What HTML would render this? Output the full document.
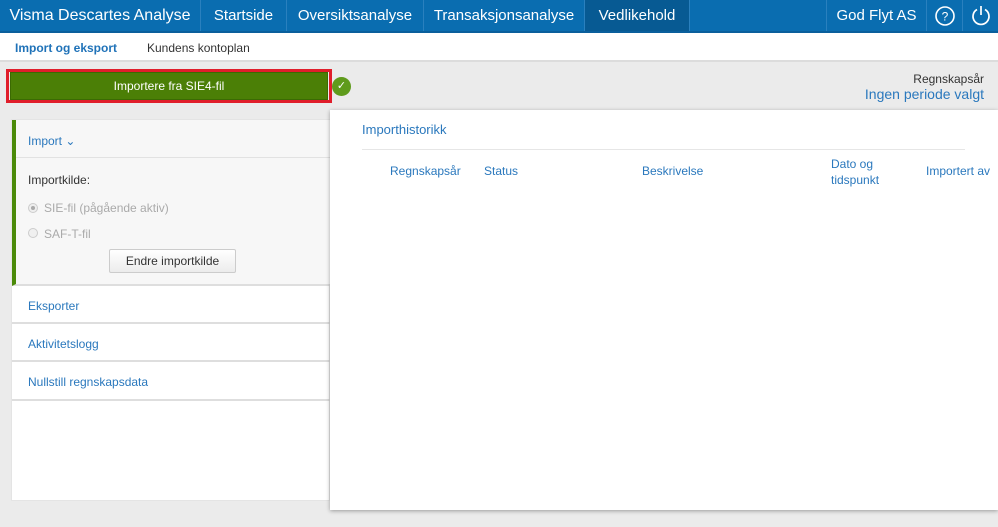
<!DOCTYPE html>
<html><head><meta charset="utf-8"><style>
*{box-sizing:border-box;margin:0;padding:0}
body{width:998px;height:527px;overflow:hidden;background:#ebebeb;font-family:"Liberation Sans",sans-serif;position:relative}
.nav{position:absolute;left:0;top:0;width:998px;height:33px;background:#0a6db0;border-bottom:2px solid #0a5f9c}
.nav div{position:absolute;top:0;height:31px;line-height:31px;color:#fff;font-size:15px;text-align:center;border-right:1px solid #2a80be}
.sub{position:absolute;left:0;top:33px;width:998px;height:29px;background:#fff;border-bottom:2px solid #dcdcdc;font-size:12px}
.sub span{position:absolute;top:8px}
.abs{position:absolute}
.panel{position:absolute;left:11px;top:119px;width:319px;height:382px;background:#fff;border:1px solid #e4e4e4}
.row{position:absolute;left:0;width:318px;border-bottom:2px solid #dedede;font-size:12px;color:#2a78bd;padding-left:16px;padding-top:2px}
.right{position:absolute;left:330px;top:110px;width:668px;height:400px;background:#fff;box-shadow:0 1px 4px rgba(0,0,0,.35)}
.h{position:absolute;font-size:12px;color:#2a78bd}
</style></head><body>
<div class="nav">
<div style="left:0;width:201px;font-size:16px">Visma Descartes Analyse</div>
<div style="left:201px;width:86px">Startside</div>
<div style="left:287px;width:137px">Oversiktsanalyse</div>
<div style="left:424px;width:161px">Transaksjonsanalyse</div>
<div style="left:585px;width:105px;background:#075a93">Vedlikehold</div>
<div style="left:826px;width:101px;border-left:1px solid #2a80be">God Flyt AS</div>
<div style="left:927px;width:36px"><svg width="22" height="22" viewBox="0 0 22 22" style="margin-top:5px"><circle cx="11" cy="11" r="9" fill="none" stroke="#fff" stroke-width="1.6"/><text x="11" y="15.5" text-anchor="middle" font-size="12" fill="#fff" font-family="Liberation Sans">?</text></svg></div>
<div style="left:963px;width:35px;border:none"><svg width="22" height="22" viewBox="0 0 22 22" style="margin-top:4px"><path d="M7 5.5A8 8 0 1 0 15 5.5" fill="none" stroke="#fff" stroke-width="1.7"/><path d="M11 2V11" stroke="#fff" stroke-width="1.7"/></svg></div>
</div>
<div class="sub"><span style="left:15px;font-weight:bold;color:#1f72b8">Import og eksport</span><span style="left:147px;color:#333">Kundens kontoplan</span></div>
<div class="abs" style="left:6px;top:69px;width:326px;height:34px;border:3px solid #e01e2b"></div>
<div class="abs" style="left:10px;top:72px;width:318px;height:28px;background:#4b7f06;border:1px solid #3b6a02;color:#fff;font-size:12px;text-align:center;line-height:26px">Importere fra SIE4-fil</div>
<div class="abs" style="left:332px;top:77px;width:19px;height:19px;border-radius:50%;background:#5f9b1c;color:#fff;font-size:11px;text-align:center;line-height:19px">✓</div>
<div class="abs" style="right:14px;top:72px;font-size:12px;color:#333">Regnskapsår</div>
<div class="abs" style="right:14px;top:86px;font-size:14px;color:#2a78bd">Ingen periode valgt</div>
<div class="panel">
<div class="abs" style="left:0;top:0;width:318px;height:166px;background:#f7f7f7;border-left:4px solid #4b8a09;border-bottom:2px solid #dedede"></div>
<div class="abs" style="left:4px;top:37px;width:314px;height:1px;background:#e2e2e2"></div>
<div class="abs" style="left:16px;top:14px;font-size:12px;color:#2a78bd">Import ⌄</div>
<div class="abs" style="left:16px;top:53px;font-size:12px;color:#333">Importkilde:</div>
<div class="abs" style="left:16px;top:83px;width:10px;height:10px;border-radius:50%;border:1px solid #ccc;background:#eee"><div style="width:4px;height:4px;border-radius:50%;background:#aaa;margin:2px"></div></div>
<div class="abs" style="left:32px;top:81px;font-size:12px;color:#aaa">SIE-fil (pågående aktiv)</div>
<div class="abs" style="left:16px;top:108px;width:10px;height:10px;border-radius:50%;border:1px solid #ccc;background:#f0f0f0"></div>
<div class="abs" style="left:32px;top:107px;font-size:12px;color:#aaa">SAF-T-fil</div>
<div class="abs" style="left:97px;top:129px;width:127px;height:24px;border:1px solid #ccc;border-radius:2px;background:linear-gradient(#fff,#ececec);font-size:12px;color:#333;text-align:center;line-height:22px">Endre importkilde</div>
<div class="row" style="top:166px;height:38px;line-height:36px">Eksporter</div>
<div class="row" style="top:204px;height:38px;line-height:36px">Aktivitetslogg</div>
<div class="row" style="top:242px;height:39px;line-height:37px">Nullstill regnskapsdata</div>
</div>
<div class="right">
<div class="h" style="left:32px;top:12px;font-size:13px">Importhistorikk</div>
<div class="abs" style="left:32px;top:39px;width:603px;height:1px;background:#e6e6e6"></div>
<div class="h" style="left:60px;top:54px">Regnskapsår</div>
<div class="h" style="left:154px;top:54px">Status</div>
<div class="h" style="left:312px;top:54px">Beskrivelse</div>
<div class="h" style="left:501px;top:46px;line-height:16px">Dato og<br>tidspunkt</div>
<div class="h" style="left:596px;top:54px">Importert av</div>
</div>
</body></html>
